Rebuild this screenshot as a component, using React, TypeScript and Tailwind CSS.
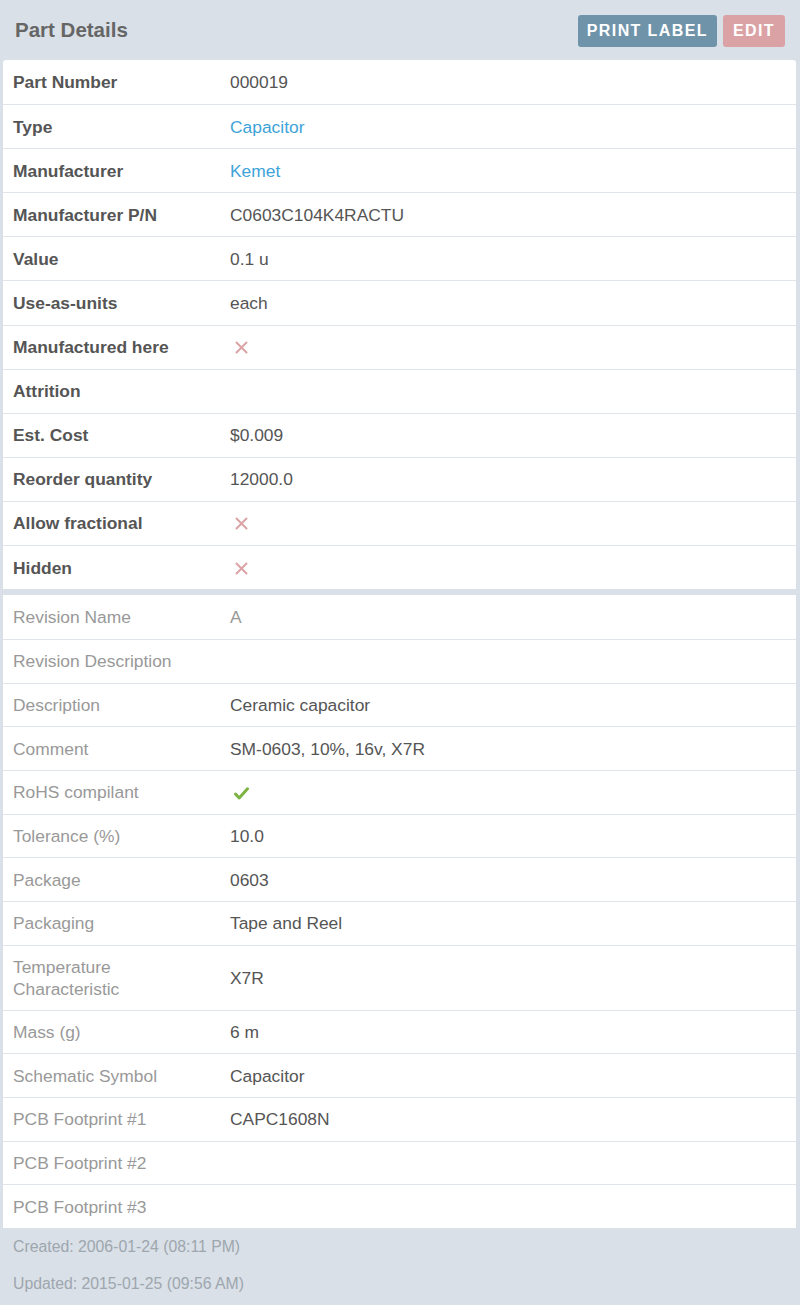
import React from "react";

type Row = { label: string; value?: React.ReactNode };

const Cross = () => (
  <svg width="13" height="13" viewBox="0 0 13 13" className="mt-[1px] ml-[5px]" aria-label="No">
    <path d="M1.5 1.5 L11.5 11.5 M11.5 1.5 L1.5 11.5" stroke="#dba3a6" strokeWidth="2" strokeLinecap="round" />
  </svg>
);

const Check = () => (
  <svg width="15" height="13" viewBox="0 0 15 13" className="mt-[3px] ml-[4px]" aria-label="Yes">
    <path d="M1.5 7 L5.2 11 L13.5 1.8" stroke="#7cb342" strokeWidth="3" fill="none" strokeLinecap="round" strokeLinejoin="round" />
  </svg>
);

const Link = ({ children }: { children: React.ReactNode }) => (
  <a className="text-[#3ea3d8]">{children}</a>
);

const partRows: Row[] = [
  { label: "Part Number", value: "000019" },
  { label: "Type", value: <Link>Capacitor</Link> },
  { label: "Manufacturer", value: <Link>Kemet</Link> },
  { label: "Manufacturer P/N", value: "C0603C104K4RACTU" },
  { label: "Value", value: "0.1 u" },
  { label: "Use-as-units", value: "each" },
  { label: "Manufactured here", value: <Cross /> },
  { label: "Attrition" },
  { label: "Est. Cost", value: "$0.009" },
  { label: "Reorder quantity", value: "12000.0" },
  { label: "Allow fractional", value: <Cross /> },
  { label: "Hidden", value: <Cross /> },
];

const revisionRows: Row[] = [
  { label: "Revision Name", value: <span className="text-[#999]">A</span> },
  { label: "Revision Description" },
  { label: "Description", value: "Ceramic capacitor" },
  { label: "Comment", value: "SM-0603, 10%, 16v, X7R" },
  { label: "RoHS compilant", value: <Check /> },
  { label: "Tolerance (%)", value: "10.0" },
  { label: "Package", value: "0603" },
  { label: "Packaging", value: "Tape and Reel" },
  { label: "Temperature Characteristic", value: "X7R" },
  { label: "Mass (g)", value: "6 m" },
  { label: "Schematic Symbol", value: "Capacitor" },
  { label: "PCB Footprint #1", value: "CAPC1608N" },
  { label: "PCB Footprint #2" },
  { label: "PCB Footprint #3" },
];

function DetailTable({ rows, strong }: { rows: Row[]; strong?: boolean }) {
  return (
    <div className="bg-white">
      {rows.map((row, i) => (
        <div
          key={row.label}
          className={`flex items-center px-[10px] py-[10px] ${strong ? "min-h-[44.1px]" : "min-h-[43.7px]"} ${
            i > 0 ? "border-t border-[#dfe5ea]" : ""
          }`}
        >
          <div
            className={`w-[217px] shrink-0 pr-[20px] leading-[22px] ${
              strong ? "font-bold text-[#555]" : "text-[#999]"
            }`}
          >
            {row.label}
          </div>
          <div className="flex min-w-0 flex-1 items-center text-[#555] leading-[22px]">{row.value}</div>
        </div>
      ))}
    </div>
  );
}

export default function App() {
  return (
    <div
      className="min-h-[1305px] bg-[#d9e0e7] text-[17.4px]"
      style={{ fontFamily: '"Liberation Sans", Arial, sans-serif' }}
    >
      <div className="flex h-[60px] items-center justify-between pl-[15px] pr-[15px]">
        <h2 className="text-[20.5px] font-bold text-[#666]">Part Details</h2>
        <div className="flex gap-[6px] pt-[1px]">
          <button className="h-[32px] rounded-[3px] bg-[#6f93a9] px-[9px] text-[16px] font-bold tracking-[1.4px] text-white">
            PRINT LABEL
          </button>
          <button className="h-[32px] rounded-[3px] bg-[#dba2a5] px-[10px] text-[16px] font-bold tracking-[1.4px] text-white">
            EDIT
          </button>
        </div>
      </div>

      <div className="mx-[3px] mr-[4px] overflow-hidden rounded-t-[3px]">
        <DetailTable rows={partRows} strong />
        <div className="mt-[6px]">
          <DetailTable rows={revisionRows} />
        </div>
      </div>

      <div className="px-[13px] pt-[0px] text-[15.8px] text-[#9ea6ae]">
        <p className="leading-[37px]">Created: 2006-01-24 (08:11 PM)</p>
        <p className="leading-[37px]">Updated: 2015-01-25 (09:56 AM)</p>
      </div>
    </div>
  );
}
